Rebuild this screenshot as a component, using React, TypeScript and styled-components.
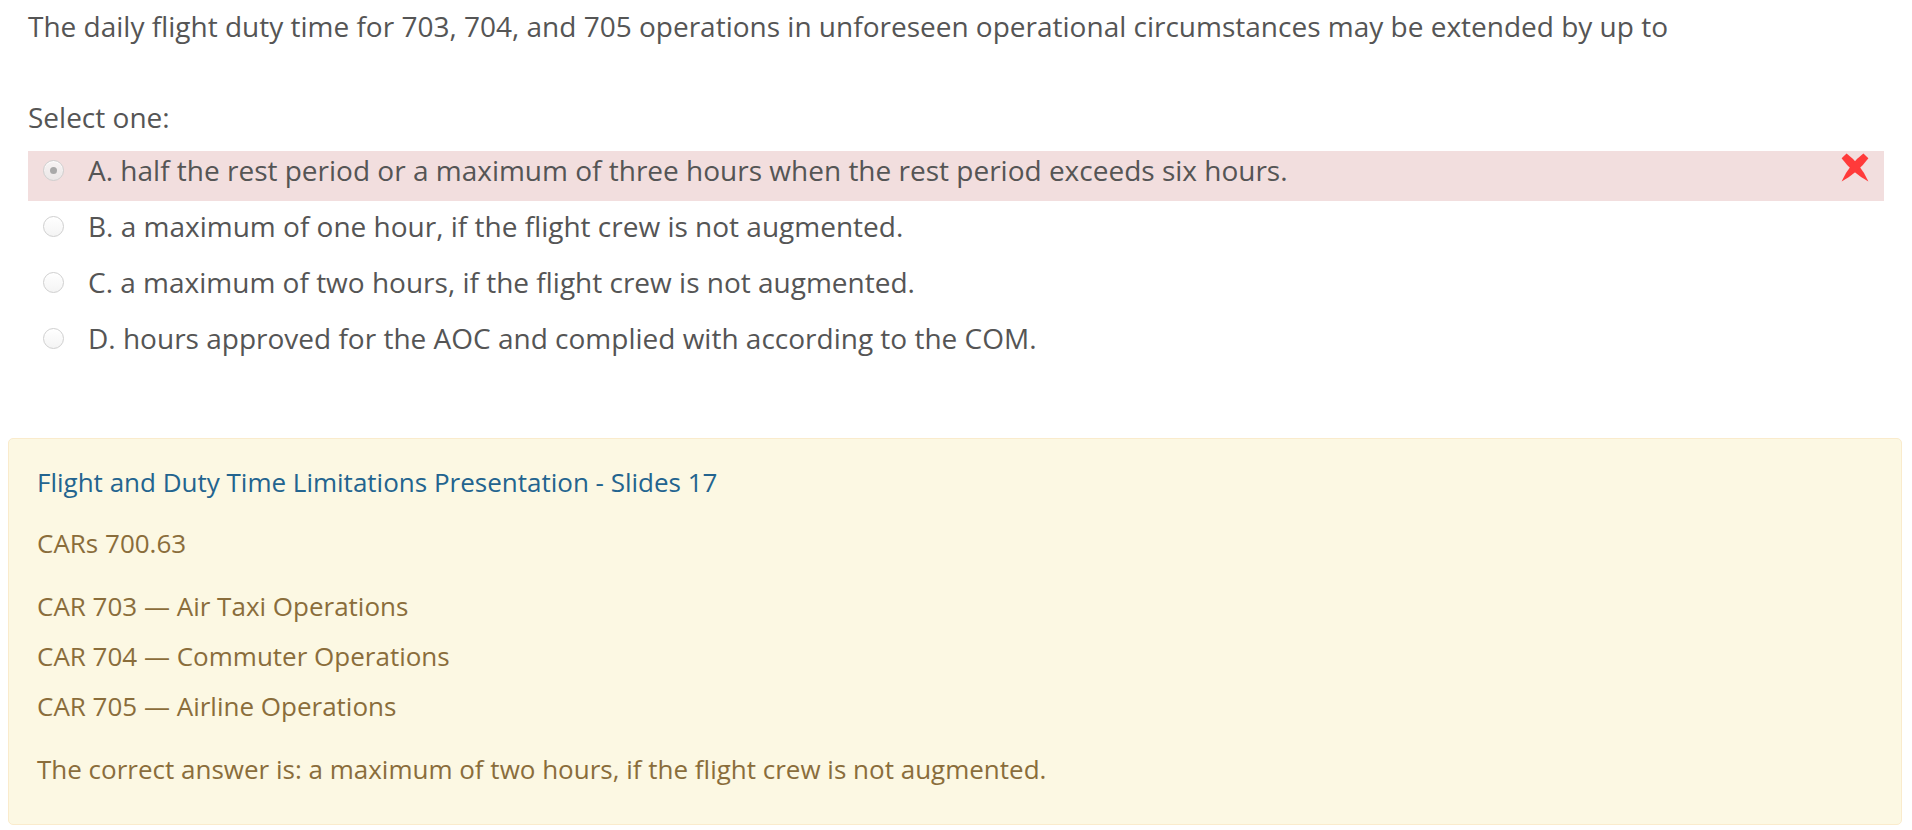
import React from "react";
import styled, { createGlobalStyle } from "styled-components";

const GlobalStyle = createGlobalStyle`
  html, body {
    margin: 0;
    padding: 0;
    background: #ffffff;
  }
  body {
    font-family: "Open Sans", "Noto Sans", "Liberation Sans", sans-serif;
    font-size: 28px;
    line-height: 38px;
    color: #555555;
  }
`;

const Page = styled.div`
  padding: 7px 10px 0 8px;
`;

const QuestionArea = styled.div`
  padding: 0 18px 0 20px;
`;

const QuestionText = styled.p`
  margin: 0;
  line-height: 38px;
`;

const Prompt = styled.p`
  margin: 53px 0 0;
  line-height: 38px;
`;

const AnswerList = styled.div`
  margin-top: 15px;
  display: flex;
  flex-direction: column;
  gap: 6px;
`;

const AnswerRow = styled.div<{ $incorrect?: boolean }>`
  display: flex;
  align-items: center;
  gap: 24px;
  padding: 0 15px 12px 15px;
  min-height: 38px;
  background: ${(p) => (p.$incorrect ? "#f2dede" : "transparent")};
`;

const Radio = styled.span<{ $checked?: boolean }>`
  flex: none;
  position: relative;
  width: 21px;
  height: 21px;
  border-radius: 50%;
  box-sizing: border-box;
  border: 1px solid #cfcfcf;
  background: ${(p) =>
    p.$checked
      ? "linear-gradient(#f7f3f3, #ebe7e7)"
      : "linear-gradient(#ffffff, #f4f4f4)"};
  box-shadow: inset 0 1px 1px rgba(255, 255, 255, 0.9);
  &::after {
    content: "";
    display: ${(p) => (p.$checked ? "block" : "none")};
    position: absolute;
    left: 50%;
    top: 50%;
    width: 7px;
    height: 7px;
    margin: -3.5px 0 0 -3.5px;
    border-radius: 50%;
    background: #a9a9a9;
  }
`;

const AnswerLabel = styled.span`
  flex: 1;
  line-height: 38px;
`;

const MarkIcon = styled.svg`
  flex: none;
  width: 28px;
  height: 29px;
  align-self: flex-start;
  margin-top: 2px;
`;

const Feedback = styled.div`
  margin-top: 69px;
  border: 1px solid #faebcc;
  border-radius: 5px;
  background: #fcf8e3;
  color: #8a6d3b;
  font-size: 26px;
  padding: 24px 27px 36px 28px;
`;

const Para = styled.p<{ $gap: number }>`
  margin: 0 0 ${(p) => p.$gap}px;
  line-height: 38px;
`;

const Link = styled.a`
  color: #23648f;
  text-decoration: none;
`;

const IncorrectIcon = () => (
  <MarkIcon viewBox="0 0 28 29" aria-label="Incorrect">
    <path
      d="M0.6 5.2 L5.6 0.6 Q19 10.5 27.4 28.4 Q11 19.5 0.6 5.2 Z"
      fill="#ff3a3a"
    />
    <path
      d="M27.4 5.2 L22.4 0.6 Q9 10.5 0.6 28.4 Q17 19.5 27.4 5.2 Z"
      fill="#ff3a3a"
    />
  </MarkIcon>
);

const answers = [
  {
    text: "A. half the rest period or a maximum of three hours when the rest period exceeds six hours.",
    checked: true,
    incorrect: true,
  },
  { text: "B. a maximum of one hour, if the flight crew is not augmented." },
  { text: "C. a maximum of two hours, if the flight crew is not augmented." },
  { text: "D. hours approved for the AOC and complied with according to the COM." },
];

export default function App() {
  return (
    <>
      <GlobalStyle />
      <Page>
        <QuestionArea>
          <QuestionText>
            The daily flight duty time for 703, 704, and 705 operations in unforeseen operational
            circumstances may be extended by up to
          </QuestionText>
          <Prompt>Select one:</Prompt>
          <AnswerList>
            {answers.map((a) => (
              <AnswerRow key={a.text} $incorrect={a.incorrect}>
                <Radio $checked={a.checked} />
                <AnswerLabel>{a.text}</AnswerLabel>
                {a.incorrect && <IncorrectIcon />}
              </AnswerRow>
            ))}
          </AnswerList>
        </QuestionArea>
        <Feedback>
          <Para $gap={23}>
            <Link href="#">Flight and Duty Time Limitations Presentation - Slides 17</Link>
          </Para>
          <Para $gap={25}>CARs 700.63</Para>
          <Para $gap={12}>CAR 703 — Air Taxi Operations</Para>
          <Para $gap={12}>CAR 704 — Commuter Operations</Para>
          <Para $gap={25}>CAR 705 — Airline Operations</Para>
          <Para $gap={0}>
            The correct answer is: a maximum of two hours, if the flight crew is not augmented.
          </Para>
        </Feedback>
      </Page>
    </>
  );
}
